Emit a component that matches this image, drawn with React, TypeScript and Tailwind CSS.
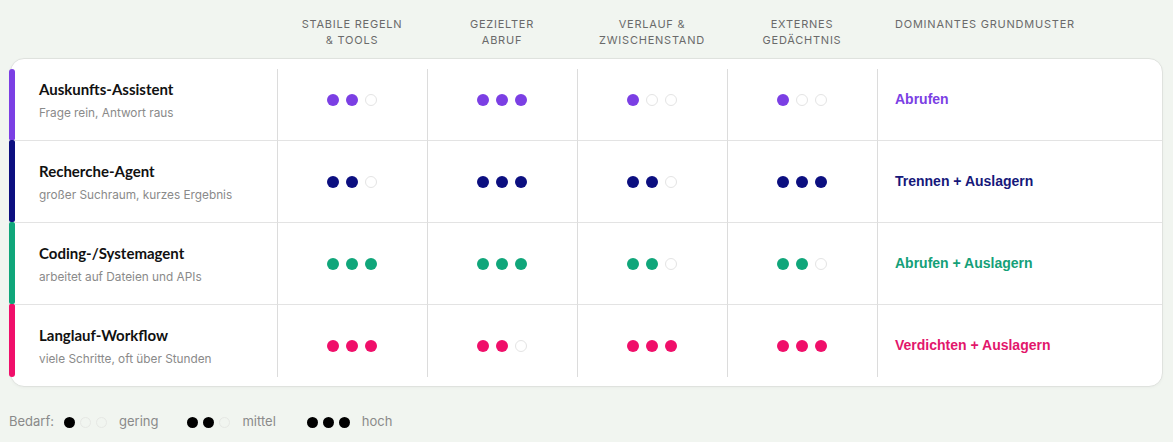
import React from "react";

type Row = {
  title: string;
  sub: string;
  levels: number[];
  pattern: string;
  dot: string;
  bar: string;
  text: string;
};

const rows: Row[] = [
  {
    title: "Auskunfts-Assistent",
    sub: "Frage rein, Antwort raus",
    levels: [2, 3, 1, 1],
    pattern: "Abrufen",
    dot: "bg-[#7b3fe4]",
    bar: "bg-[#7b3fe4]",
    text: "text-[#7b3fe4]",
  },
  {
    title: "Recherche-Agent",
    sub: "großer Suchraum, kurzes Ergebnis",
    levels: [2, 3, 2, 3],
    pattern: "Trennen + Auslagern",
    dot: "bg-[#0c0f80]",
    bar: "bg-[#0c0f80]",
    text: "text-[#16187a]",
  },
  {
    title: "Coding-/Systemagent",
    sub: "arbeitet auf Dateien und APIs",
    levels: [3, 3, 2, 2],
    pattern: "Abrufen + Auslagern",
    dot: "bg-[#10a67a]",
    bar: "bg-[#10a67a]",
    text: "text-[#14a078]",
  },
  {
    title: "Langlauf-Workflow",
    sub: "viele Schritte, oft über Stunden",
    levels: [3, 2, 3, 3],
    pattern: "Verdichten + Auslagern",
    dot: "bg-[#f00f6a]",
    bar: "bg-[#f00f6a]",
    text: "text-[#e2166b]",
  },
];

const heads = [
  ["STABILE REGELN", "& TOOLS"],
  ["GEZIELTER", "ABRUF"],
  ["VERLAUF &", "ZWISCHENSTAND"],
  ["EXTERNES", "GEDÄCHTNIS"],
];

function Dots({ n, color }: { n: number; color: string }) {
  return (
    <div className="flex items-center gap-[7px] ml-[-1px]">
      {[0, 1, 2].map((i) =>
        i < n ? (
          <span key={i} className={`block w-[12px] h-[12px] rounded-full ${color}`} />
        ) : (
          <span key={i} className="block w-[12px] h-[12px] rounded-full bg-white border border-[#e4e4e4]" />
        )
      )}
    </div>
  );
}

function LegendDots({ n }: { n: number }) {
  return (
    <div className="flex items-center gap-[5px]">
      {[0, 1, 2].map((i) =>
        i < n ? (
          <span key={i} className="block w-[11px] h-[11px] rounded-full bg-black" />
        ) : (
          <span key={i} className="block w-[11px] h-[11px] rounded-full border border-[#e6e8e4]" />
        )
      )}
    </div>
  );
}

export default function App() {
  return (
    <div
      className="w-[1173px] h-[442px] bg-[#f1f5f0] px-[10px] overflow-hidden"
      style={{ fontFamily: "Inter, 'Noto Sans', sans-serif" }}
    >
      {/* header */}
      <div className="flex pt-[16px] mb-[10px] text-[11px] leading-[16px] tracking-[0.07em] text-[#6a6a6a]">
        <div className="w-[267px]" />
        {heads.map((h, i) => (
          <div key={i} className="w-[150px] text-center">
            <div>{h[0]}</div>
            <div>{h[1]}</div>
          </div>
        ))}
        <div className="flex-1 pl-[18px]">DOMINANTES GRUNDMUSTER</div>
      </div>

      {/* card */}
      <div className="bg-white border border-[#dfe2de] rounded-[14px] shadow-[0_1px_3px_rgba(0,0,0,0.03)]">
        {rows.map((r, ri) => {
          const first = ri === 0;
          const last = ri === rows.length - 1;
          const cellPos = first
            ? "mt-[10px] pb-[10px]"
            : last
            ? "border-t border-t-[#e3e3e3] mb-[9px] pt-[9px]"
            : "border-t border-t-[#e3e3e3]";
          const barPos = first
            ? "mt-[10px] rounded-t-[4px] rounded-b-[2px]"
            : last
            ? "mb-[9px] rounded-b-[4px] rounded-t-[2px]"
            : "rounded-[2px]";
          return (
            <div key={ri} className={`flex ${first ? "h-[81px]" : "h-[82px]"}`}>
              <div className={`w-[6px] ml-[-2px] shrink-0 ${r.bar} ${barPos}`} />
              <div className={`w-[262px] shrink-0 pl-[24px] flex flex-col justify-center ${cellPos}`}>
                <div
                  className="text-[15px] leading-[20px] font-bold text-[#111111]"
                  style={{ fontFamily: "Lato, 'Open Sans', sans-serif" }}
                >
                  {r.title}
                </div>
                <div className="text-[11.8px] leading-[16px] text-[#8a8a8a] mt-[6px]">{r.sub}</div>
              </div>
              {r.levels.map((l, li) => (
                <div
                  key={li}
                  className={`w-[150px] shrink-0 border-l border-l-[#dcdcdc] flex items-center justify-center ${cellPos}`}
                >
                  <Dots n={l} color={r.dot} />
                </div>
              ))}
              <div className={`flex-1 border-l border-l-[#dcdcdc] pl-[17px] flex items-center ${cellPos}`}>
                <span
                  className={`text-[14px] font-bold ${r.text}`}
                  style={{ fontFamily: "'Liberation Sans', Arial, sans-serif" }}
                >
                  {r.pattern}
                </span>
              </div>
            </div>
          );
        })}
      </div>

      {/* legend */}
      <div className="flex items-center mt-[25px] h-[20px] text-[13px] text-[#8a8a8a]">
        <span className="mr-[10px] ml-[-1px]">Bedarf:</span>
        <LegendDots n={1} />
        <span className="ml-[12px] mr-[29px]">gering</span>
        <LegendDots n={2} />
        <span className="ml-[12px] mr-[31px]">mittel</span>
        <LegendDots n={3} />
        <span className="ml-[12px]">hoch</span>
      </div>
    </div>
  );
}
